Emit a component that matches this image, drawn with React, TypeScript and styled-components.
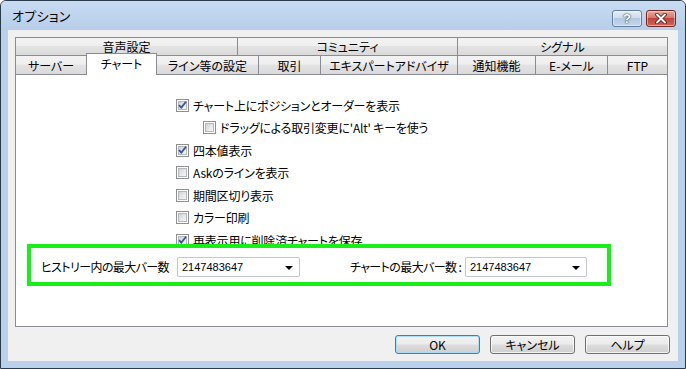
import React from "react";
import styled, { createGlobalStyle } from "styled-components";

const GlobalStyle = createGlobalStyle`
  html, body {
    margin: 0;
    padding: 0;
    background: #ffffff;
  }
  body {
    font-family: "Noto Sans CJK JP", "Noto Sans", sans-serif;
    font-size: 12px;
    font-feature-settings: "palt" 1;
    color: #000;
  }
`;

const Window = styled.div`
  position: relative;
  width: 686px;
  height: 369px;
  box-sizing: border-box;
  border: 1px solid #2c3b4c;
  border-radius: 6px 6px 0 0;
  background: #bad1eb;
  display: flex;
  flex-direction: column;
  overflow: hidden;
`;

const TitleBar = styled.div`
  height: 29px;
  flex: none;
  display: flex;
  justify-content: space-between;
  align-items: center;
  padding: 0 9px 0 11px;
  background: linear-gradient(#c8dcf2, #b7cee9);
`;

const Title = styled.span`
  font-size: 13px;
  letter-spacing: 0.3px;
`;

const Caption = styled.div`
  display: flex;
  gap: 4px;
  align-self: flex-start;
  margin-top: 9px;
`;

const CaptionButton = styled.div<{ $close?: boolean }>`
  width: 30px;
  height: 17px;
  box-sizing: border-box;
  border: 1px solid ${(p) => (p.$close ? "#6e2a22" : "#5f7ea4")};
  border-radius: 3px;
  display: flex;
  align-items: center;
  justify-content: center;
  font-family: "Liberation Sans", sans-serif;
  font-weight: bold;
  font-size: 13px;
  color: #ffffff;
  text-shadow: 0 0 2px #2a3c55, 0 0 1px #2a3c55;
  background: ${(p) =>
    p.$close
      ? "linear-gradient(#e9a99c 0%, #d5776a 45%, #c2443a 50%, #d0655a 100%)"
      : "linear-gradient(#e6eef8 0%, #cfdcec 45%, #b3c8e2 50%, #c4d6ec 100%)"};
  box-shadow: inset 0 0 0 1px rgba(255, 255, 255, 0.45);
`;

const Frame = styled.div`
  flex: 1;
  padding: 0 7px 7px;
  display: flex;
`;

const Content = styled.div`
  flex: 1;
  background: #f0f0f0;
  padding: 7px 8px 0 7px;
  display: flex;
  flex-direction: column;
`;

const TabRow = styled.div<{ $h: number }>`
  display: flex;
  align-items: flex-end;
  height: ${(p) => p.$h}px;
  margin-right: 2px;
`;

const Tab = styled.div<{ $w: number; $first?: boolean; $selected?: boolean }>`
  position: relative;
  box-sizing: border-box;
  width: ${(p) => (p.$selected ? p.$w + 1 : p.$w)}px;
  height: ${(p) => (p.$selected ? "22px" : "100%")};
  margin-left: ${(p) => (p.$selected ? "-1px" : "0")};
  margin-bottom: ${(p) => (p.$selected ? "-1px" : "0")};
  z-index: ${(p) => (p.$selected ? 2 : 0)};
  border-top: 1px solid #898c95;
  border-right: 1px solid #898c95;
  border-left: ${(p) => (p.$first || p.$selected ? "1px solid #898c95" : "none")};
  background: ${(p) =>
    p.$selected
      ? "#ffffff"
      : "linear-gradient(#f3f3f3 0%, #efefef 45%, #e3e3e3 50%, #dadada 100%)"};
  display: flex;
  align-items: center;
  justify-content: center;
  padding-bottom: ${(p) => (p.$selected ? "3px" : "0")};
  white-space: nowrap;
`;

const Panel = styled.div`
  height: 253px;
  box-sizing: border-box;
  margin-right: 2px;
  border: 1px solid #898c95;
  background: #ffffff;
  padding-top: 19px;
`;

const CheckList = styled.div`
  padding-left: 160px;
`;

const CheckRow = styled.div<{ $indent?: number }>`
  height: 22.5px;
  display: flex;
  align-items: center;
  padding-left: ${(p) => p.$indent || 0}px;
  white-space: nowrap;
  letter-spacing: -0.2px;
`;

const CheckBox = styled.span`
  position: relative;
  width: 13px;
  height: 13px;
  box-sizing: border-box;
  border: 1px solid #8e8f8f;
  background: #ffffff;
  padding: 1px;
  margin-right: 4px;
  flex: none;
`;

const CheckInner = styled.span`
  display: block;
  width: 9px;
  height: 9px;
  box-sizing: border-box;
  border: 1px solid #b3b8be;
  background: linear-gradient(135deg, #cfd3d8 0%, #e6e8eb 55%, #f7f7f7 100%);
`;

const CheckMark = styled.svg`
  position: absolute;
  left: 0;
  top: 0;
`;

const ComboRow = styled.div`
  display: flex;
  align-items: center;
  height: 20px;
  margin-top: 5px;
  padding-left: 25px;
`;

const FieldLabel = styled.span<{ $w: number; $gap?: number }>`
  width: ${(p) => p.$w}px;
  margin-left: ${(p) => p.$gap || 0}px;
  white-space: nowrap;
  letter-spacing: -0.6px;
`;

const Combo = styled.div<{ $w: number }>`
  width: ${(p) => p.$w}px;
  height: 20px;
  box-sizing: border-box;
  border: 1px solid #c5c7cc;
  border-radius: 2px;
  background: #ffffff;
  display: flex;
  align-items: center;
  justify-content: space-between;
  padding: 0 6px 0 4px;
  font-family: "Liberation Sans", sans-serif;
  font-size: 11px;
`;

const Arrow = styled.span`
  width: 0;
  height: 0;
  border-left: 4px solid transparent;
  border-right: 4px solid transparent;
  border-top: 4px solid #000;
  margin-top: 2px;
`;

const ButtonRow = styled.div`
  display: flex;
  justify-content: flex-end;
  gap: 10px;
  margin-top: 8px;
`;

const Button = styled.div<{ $default?: boolean }>`
  width: 85px;
  height: 19px;
  box-sizing: border-box;
  border: 1px solid ${(p) => (p.$default ? "#3c7fb1" : "#707070")};
  border-radius: 3px;
  background: linear-gradient(#f2f2f2 0%, #ebebeb 48%, #dddddd 52%, #cfcfcf 100%);
  box-shadow: inset 0 0 0 1px
    ${(p) => (p.$default ? "rgba(170, 220, 245, 0.9)" : "rgba(255, 255, 255, 0.7)")};
  display: flex;
  align-items: center;
  justify-content: center;
`;

const Highlight = styled.div`
  position: absolute;
  left: 26px;
  top: 243px;
  width: 584px;
  height: 42px;
  box-sizing: border-box;
  border: 4px solid #19ee19;
  pointer-events: none;
`;

const topTabs = [
  { label: "音声設定", w: 223 },
  { label: "コミュニティ", w: 220 },
  { label: "シグナル", w: 210 },
];

const bottomTabs = [
  { label: "サーバー", w: 72 },
  { label: "チャート", w: 70, selected: true },
  { label: "ライン等の設定", w: 102 },
  { label: "取引", w: 62 },
  { label: "エキスパートアドバイザ", w: 137 },
  { label: "通知機能", w: 78 },
  { label: "E-メール", w: 72 },
  { label: "FTP", w: 60 },
];

const options = [
  { label: "チャート上にポジションとオーダーを表示", checked: true },
  { label: "ドラッグによる取引変更に'Alt' キーを使う", checked: false, indent: 27 },
  { label: "四本値表示", checked: true },
  { label: "Askのラインを表示", checked: false },
  { label: "期間区切り表示", checked: false },
  { label: "カラー印刷", checked: false },
  { label: "再表示用に削除済チャートを保存", checked: true },
];

const Check = ({ checked }: { checked: boolean }) => (
  <CheckBox>
    <CheckInner />
    {checked && (
      <CheckMark width="11" height="11" viewBox="0 0 11 11">
        <path d="M2 5.2 L4.3 7.6 L9 1.8" fill="none" stroke="#3a539b" strokeWidth="1.8" />
      </CheckMark>
    )}
  </CheckBox>
);

export default function App() {
  return (
    <>
      <GlobalStyle />
      <Window>
        <TitleBar>
          <Title>オプション</Title>
          <Caption>
            <CaptionButton>?</CaptionButton>
            <CaptionButton $close>
              <svg width="14" height="11" viewBox="0 0 14 11">
                <path d="M3 1.5 L11 9.5 M11 1.5 L3 9.5" stroke="#4a1a14" strokeWidth="3.6" strokeLinecap="round" />
                <path d="M3 1.5 L11 9.5 M11 1.5 L3 9.5" stroke="#ffffff" strokeWidth="2" strokeLinecap="round" />
              </svg>
            </CaptionButton>
          </Caption>
        </TitleBar>
        <Frame>
          <Content>
            <TabRow $h={18}>
              {topTabs.map((t, i) => (
                <Tab key={t.label} $w={t.w} $first={i === 0}>
                  {t.label}
                </Tab>
              ))}
            </TabRow>
            <TabRow $h={19}>
              {bottomTabs.map((t, i) => (
                <Tab key={t.label} $w={t.w} $first={i === 0} $selected={t.selected}>
                  {t.label}
                </Tab>
              ))}
            </TabRow>
            <Panel>
              <CheckList>
                {options.map((o) => (
                  <CheckRow key={o.label} $indent={o.indent}>
                    <Check checked={o.checked} />
                    {o.label}
                  </CheckRow>
                ))}
              </CheckList>
              <ComboRow>
                <FieldLabel $w={136}>ヒストリー内の最大バー数</FieldLabel>
                <Combo $w={123}>
                  2147483647
                  <Arrow />
                </Combo>
                <FieldLabel $w={115} $gap={50}>
                  チャートの最大バー数 :
                </FieldLabel>
                <Combo $w={122}>
                  2147483647
                  <Arrow />
                </Combo>
              </ComboRow>
            </Panel>
            <ButtonRow>
              <Button $default>OK</Button>
              <Button>キャンセル</Button>
              <Button>ヘルプ</Button>
            </ButtonRow>
          </Content>
        </Frame>
        <Highlight />
      </Window>
    </>
  );
}
